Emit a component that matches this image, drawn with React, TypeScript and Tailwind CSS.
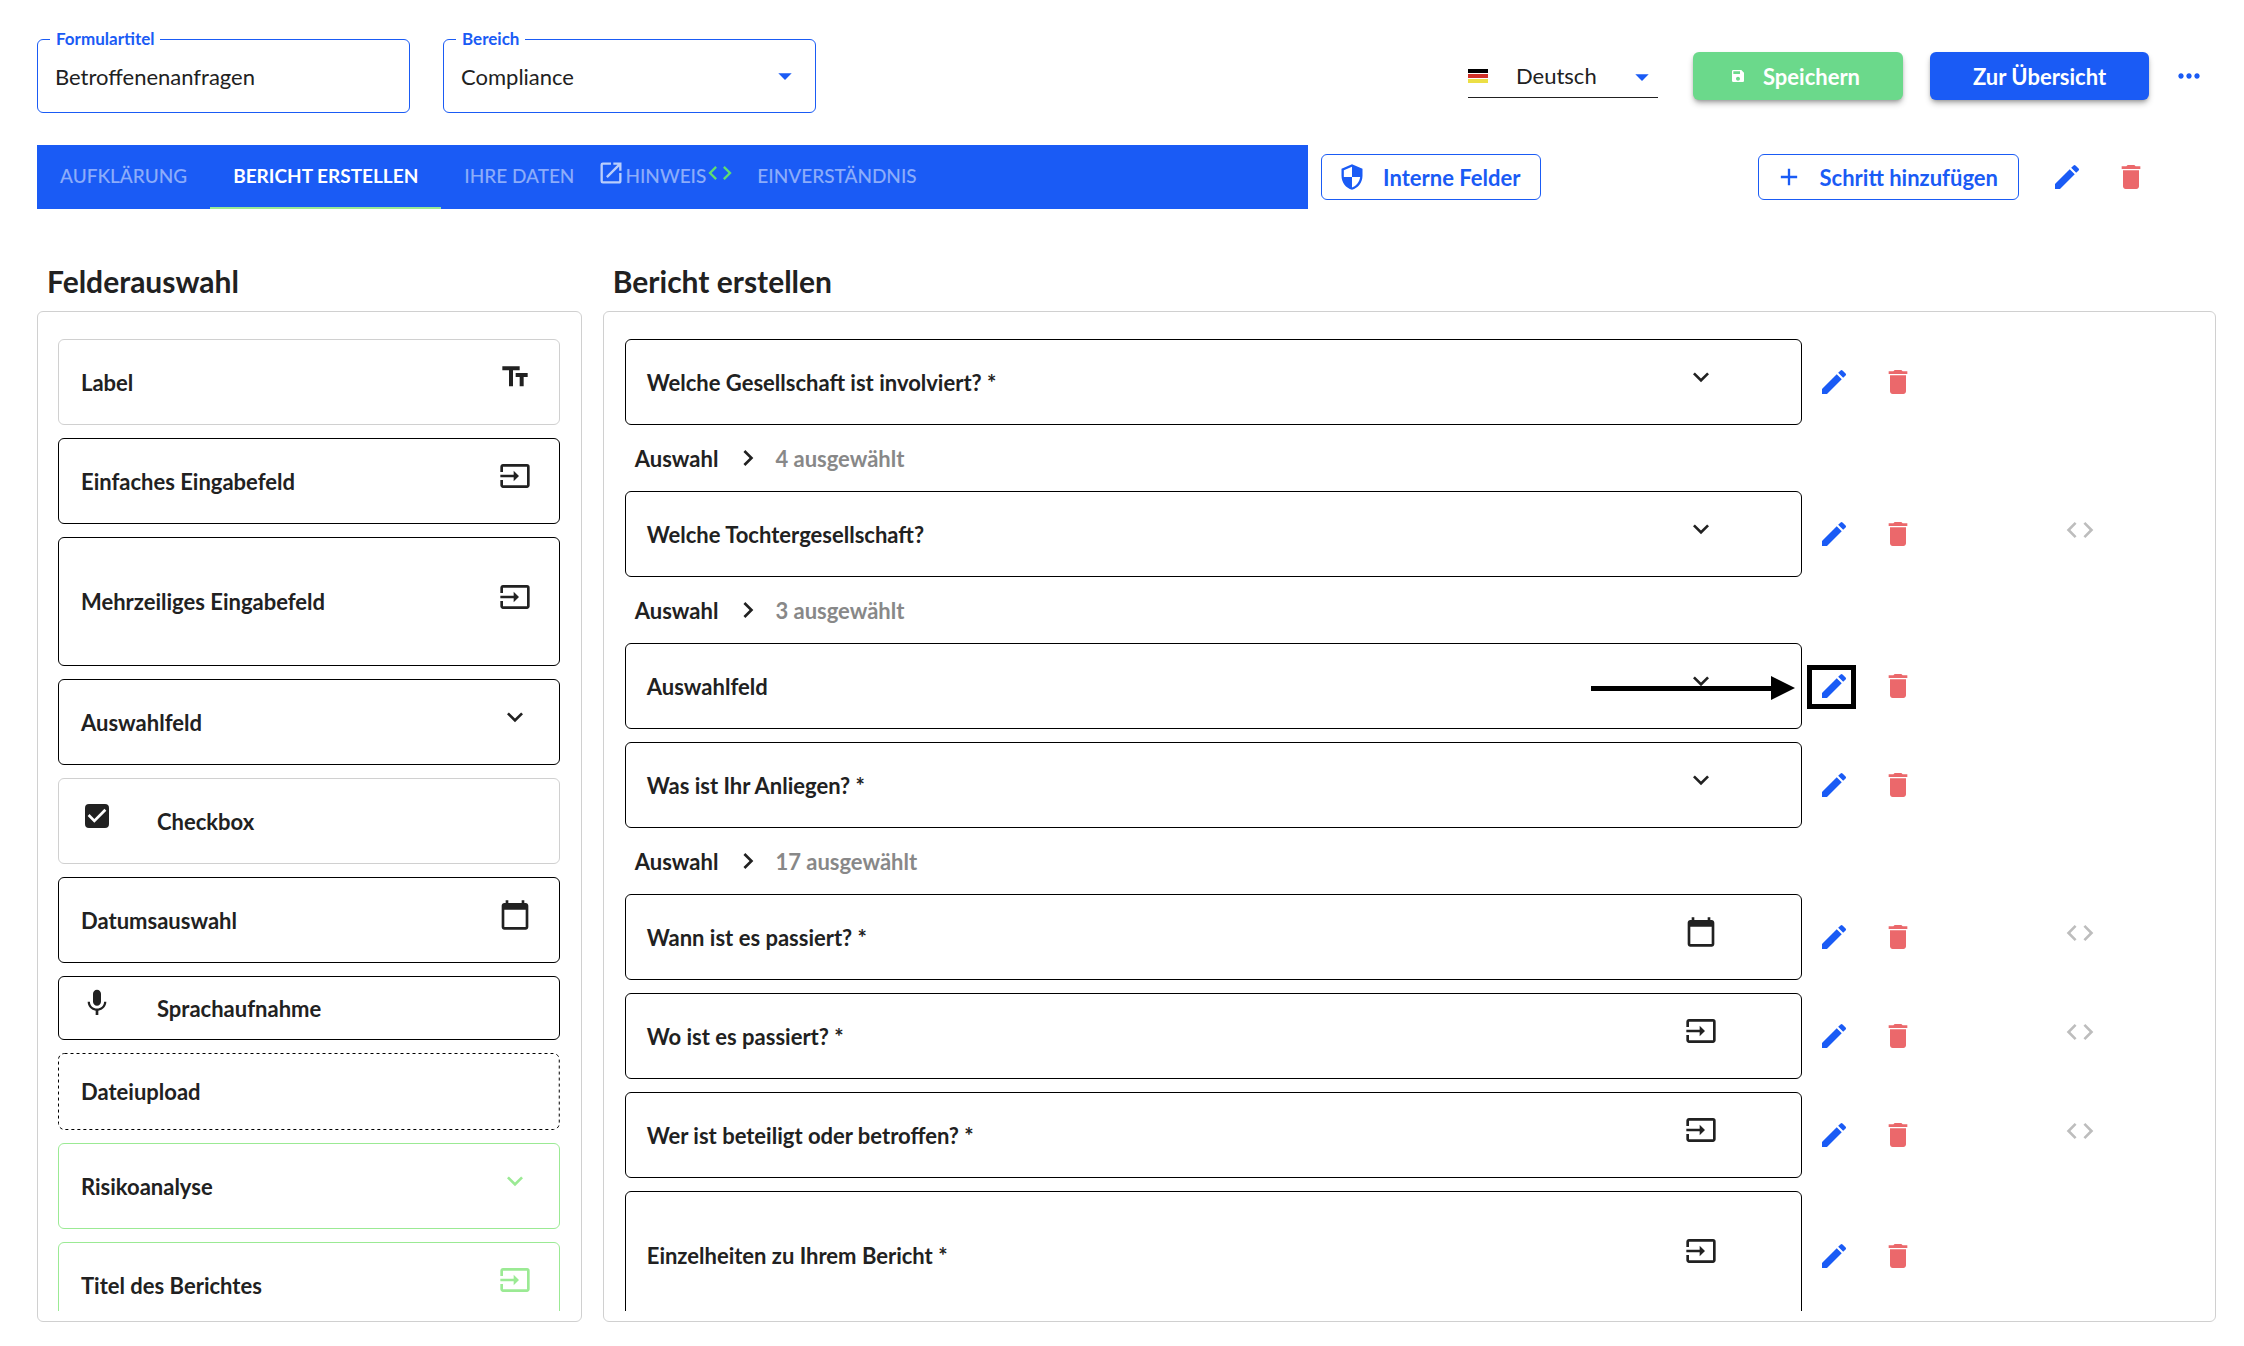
import React, { useState } from 'react';
import type { IconType } from 'react-icons';
import {
  MdAdd,
  MdArrowDropDown,
  MdCalendarToday,
  MdCode,
  MdDelete,
  MdEdit,
  MdExpandMore,
  MdInput,
  MdMic,
  MdMoreHoriz,
  MdOpenInNew,
  MdSave,
  MdSecurity,
  MdTextFields,
} from 'react-icons/md';

interface PaletteItem {
  label: string;
  icon?: IconType;
  leading?: boolean;
  checkbox?: boolean;
  dotted?: boolean;
  box: string;
  iconColor?: string;
}

interface FormField {
  label: string;
  icon: IconType;
  selected?: string;
  condition?: boolean;
  tall?: boolean;
  highlighted?: boolean;
}

const palette: PaletteItem[] = [
  { label: 'Label', icon: MdTextFields, box: 'h-[86px] border-[#d0d0d0]' },
  { label: 'Einfaches Eingabefeld', icon: MdInput, box: 'h-[86px] border-black' },
  { label: 'Mehrzeiliges Eingabefeld', icon: MdInput, box: 'h-[129px] border-black' },
  { label: 'Auswahlfeld', icon: MdExpandMore, box: 'h-[86px] border-black' },
  { label: 'Checkbox', checkbox: true, leading: true, box: 'h-[86px] border-[#d0d0d0]' },
  { label: 'Datumsauswahl', icon: MdCalendarToday, box: 'h-[86px] border-black' },
  { label: 'Sprachaufnahme', icon: MdMic, leading: true, box: 'h-16 border-black' },
  { label: 'Dateiupload', dotted: true, box: 'h-[77px] border-transparent' },
  { label: 'Risikoanalyse', icon: MdExpandMore, box: 'h-[86px] border-[#9bea94]', iconColor: 'text-[#9bea94]' },
  { label: 'Titel des Berichtes', icon: MdInput, box: 'h-[86px] border-[#9bea94]', iconColor: 'text-[#9bea94]' },
];

const fields: FormField[] = [
  { label: 'Welche Gesellschaft ist involviert? *', icon: MdExpandMore, selected: '4 ausgewählt' },
  { label: 'Welche Tochtergesellschaft?', icon: MdExpandMore, selected: '3 ausgewählt', condition: true },
  { label: 'Auswahlfeld', icon: MdExpandMore, highlighted: true },
  { label: 'Was ist Ihr Anliegen? *', icon: MdExpandMore, selected: '17 ausgewählt' },
  { label: 'Wann ist es passiert? *', icon: MdCalendarToday, condition: true },
  { label: 'Wo ist es passiert? *', icon: MdInput, condition: true },
  { label: 'Wer ist beteiligt oder betroffen? *', icon: MdInput, condition: true },
  { label: 'Einzelheiten zu Ihrem Bericht *', icon: MdInput, tall: true },
];

const tabs = ['Aufklärung', 'Bericht erstellen', 'Ihre Daten', 'Hinweis', 'Einverständnis'];

const EditButton = () => (
  <button aria-label="Bearbeiten" className="text-[#1a5bf5]">
    <MdEdit className="size-8" />
  </button>
);

const DeleteButton = () => (
  <button aria-label="Löschen" className="text-[#eb686b]">
    <MdDelete className="size-8" />
  </button>
);

const GermanFlag = () => (
  <svg viewBox="0 0 20 14" className="w-5 h-3.5 shrink-0">
    <rect width="20" height="4" fill="#000" />
    <rect y="5" width="20" height="4" fill="#d03027" />
    <rect y="10" width="20" height="4" fill="#ecdf45" />
  </svg>
);

const Header = () => {
  const [title, setTitle] = useState('Betroffenenanfragen');

  return (
    <header className="flex items-center justify-between">
      <div className="flex gap-[33px]">
        <div className="relative w-[373px] h-[74px] border border-[#1a5bf5] rounded-md">
          <label htmlFor="title" className="absolute left-3 -top-[11px] bg-white px-1.5 text-[17px] leading-5 font-bold text-[#1a5bf5]">
            Formulartitel
          </label>
          <input
            id="title"
            value={title}
            onChange={(e) => setTitle(e.target.value)}
            className="w-full h-full px-[17px] text-[22px] outline-none bg-transparent"
          />
        </div>
        <div className="relative w-[373px] h-[74px] border border-[#1a5bf5] rounded-md">
          <label htmlFor="area" className="absolute left-3 -top-[11px] bg-white px-1.5 text-[17px] leading-5 font-bold text-[#1a5bf5]">
            Bereich
          </label>
          <select id="area" className="w-full h-full px-[17px] text-[22px] appearance-none outline-none bg-transparent">
            <option>Compliance</option>
          </select>
          <MdArrowDropDown className="absolute right-3.5 top-5 size-8 text-[#1a5bf5] pointer-events-none" />
        </div>
      </div>

      <div className="flex items-center pr-[11px]">
        <div className="relative flex items-center w-[190px] h-[43px] mr-[35px] border-b border-[#212121]">
          <GermanFlag />
          <select aria-label="Sprache" className="w-full h-full pl-7 text-[22px] appearance-none outline-none bg-transparent">
            <option>Deutsch</option>
          </select>
          <MdArrowDropDown className="absolute right-0 top-1.5 size-8 text-[#1a5bf5] pointer-events-none" />
        </div>
        <button className="flex items-center justify-center gap-[17px] w-[210px] h-12 mr-[27px] pr-1.5 rounded-md bg-[#6bd98b] text-white text-[22px] font-bold shadow-md shadow-black/30">
          <MdSave className="size-4" />
          Speichern
        </button>
        <button className="w-[219px] h-12 mr-6 rounded-md bg-[#1a5bf5] text-white text-[22px] font-bold shadow-md shadow-black/30">
          Zur Übersicht
        </button>
        <button aria-label="Mehr" className="text-[#1a5bf5]">
          <MdMoreHoriz className="size-8" />
        </button>
      </div>
    </header>
  );
};

const StepBar = () => {
  const [active, setActive] = useState('Bericht erstellen');

  return (
    <div className="flex items-center mt-8">
      <nav className="flex w-7/12 h-16 bg-[#1a5bf5]">
        {tabs.map((tab) => (
          <button
            key={tab}
            onClick={() => setActive(tab)}
            className={`flex items-center text-[19px] uppercase border-b-2 ${tab === 'Hinweis' ? '' : 'px-[23px]'} ${
              tab === active ? 'font-bold text-white border-[#9bea94]' : 'font-medium text-white/50 border-transparent'
            }`}
          >
            {tab === 'Hinweis' && <MdOpenInNew className="size-7 mb-1.5 text-white/70" />}
            {tab}
            {tab === 'Hinweis' && <MdCode className="size-7 mb-1.5 text-[#5fdc72]" />}
          </button>
        ))}
      </nav>
      <button className="flex items-center gap-[17px] h-[46px] ml-[13px] pl-4 pr-5 border border-[#1a5bf5] rounded-md text-[22px] font-bold text-[#1a5bf5]">
        <MdSecurity className="size-7" />
        Interne Felder
      </button>
      <div className="flex items-center gap-8 ml-auto pr-[69px]">
        <button className="flex items-center gap-[17px] h-[46px] pl-4 pr-5 border border-[#1a5bf5] rounded-md text-[22px] font-bold text-[#1a5bf5]">
          <MdAdd className="size-7" />
          Schritt hinzufügen
        </button>
        <EditButton />
        <DeleteButton />
      </div>
    </div>
  );
};

// Border dots with a wider gap than border-dotted gives
const DottedOutline = () => (
  <svg className="absolute -inset-px w-[calc(100%+2px)] h-[calc(100%+2px)] overflow-visible pointer-events-none">
    <rect
      x="0.5"
      y="0.5"
      rx="6"
      fill="none"
      stroke="#000"
      strokeDasharray="3 3"
      className="w-[calc(100%-1px)] h-[calc(100%-1px)]"
    />
  </svg>
);

const PaletteCard: React.FC<{ item: PaletteItem }> = ({ item }) => {
  const Icon = item.icon;

  return (
    <li
      draggable
      className={`relative flex items-center shrink-0 pl-[22px] pr-7 border rounded-md ${item.box} ${item.leading ? '' : 'justify-between'}`}
    >
      {item.dotted && <DottedOutline />}
      {item.leading && (
        <span className="grid place-items-center size-8 mb-2.5 mr-11">
          {item.checkbox && (
            <>
              <input
                id="palette-checkbox"
                type="checkbox"
                defaultChecked
                className="col-start-1 row-start-1 size-6 appearance-none rounded-sm border-2 border-[#212121] checked:bg-[#212121]"
              />
              <svg viewBox="0 0 24 24" className="col-start-1 row-start-1 size-8 text-white pointer-events-none">
                <path fill="currentColor" d="M10 17l-5-5 1.41-1.41L10 14.17l7.59-7.59L19 8z" />
              </svg>
            </>
          )}
          {Icon && <Icon className="size-8" />}
        </span>
      )}
      {item.checkbox ? <label htmlFor="palette-checkbox">{item.label}</label> : <span>{item.label}</span>}
      {Icon && !item.leading && <Icon className={`size-8 mb-2.5 ${item.iconColor ?? ''}`} />}
    </li>
  );
};

// Callout drawn over the row whose edit button is explained
const EditPointer = () => (
  <svg viewBox="0 0 204 24" className="absolute right-1.5 top-8 w-[204px] h-6 pointer-events-none">
    <path d="M0 10h180V0l24 12-24 12V15H0z" />
  </svg>
);

const FieldRow: React.FC<{ field: FormField }> = ({ field }) => {
  const Icon = field.icon;

  return (
    <li className="shrink-0">
      <div className="flex items-center">
        <div
          className={`relative flex items-center justify-between w-3/4 pl-[21px] pr-[84px] border border-black rounded-md ${
            field.tall ? 'h-[129px]' : 'h-[86px]'
          }`}
        >
          <span>{field.label}</span>
          <Icon className="size-8 mb-2.5" />
          {field.highlighted && <EditPointer />}
        </div>
        <div className="relative flex gap-8 ml-4">
          {field.highlighted && (
            <span className="absolute -left-[11px] -top-[5px] w-[49px] h-11 border-5 border-black pointer-events-none" />
          )}
          <EditButton />
          <DeleteButton />
        </div>
        {field.condition && (
          <button aria-label="Bedingung" className="ml-[150px] mb-2 text-[#bdbdbd]">
            <MdCode className="size-8" />
          </button>
        )}
      </div>
      {field.selected && (
        <div className="flex items-center h-[53px] pt-[13px] pl-2.5">
          <span>Auswahl</span>
          <MdExpandMore className="size-8 ml-3.5 mr-[11px] -rotate-90" />
          <span className="text-[#888888]">{field.selected}</span>
        </div>
      )}
    </li>
  );
};

export default function App() {
  return (
    <div className="flex flex-col h-screen pt-[39px] pb-6 pl-[37px] pr-7 bg-white text-[#212121] font-['Lato',sans-serif]">
      <Header />
      <StepBar />
      <main className="flex flex-1 min-h-0 gap-[21px] mt-[54px]">
        <section className="flex flex-col w-1/4 min-h-0">
          <h2 className="mb-3 pl-2.5 text-3xl font-bold">Felderauswahl</h2>
          <div className="flex flex-col flex-1 min-h-0 pl-5 pr-[21px] pt-[27px] pb-2.5 border border-[#d0d0d0] rounded-md">
            <ul className="flex flex-col flex-1 min-h-0 gap-[13px] overflow-hidden text-[22px] font-bold">
              {palette.map((item) => (
                <PaletteCard key={item.label} item={item} />
              ))}
            </ul>
          </div>
        </section>
        <section className="flex flex-col flex-1 min-h-0">
          <h2 className="mb-3 pl-2.5 text-3xl font-bold">Bericht erstellen</h2>
          <div className="flex flex-col flex-1 min-h-0 px-[21px] pt-[27px] pb-2.5 border border-[#d0d0d0] rounded-md">
            <ul className="flex flex-col flex-1 min-h-0 gap-[13px] overflow-hidden text-[22px] font-bold">
              {fields.map((field) => (
                <FieldRow key={field.label} field={field} />
              ))}
            </ul>
          </div>
        </section>
      </main>
    </div>
  );
}
